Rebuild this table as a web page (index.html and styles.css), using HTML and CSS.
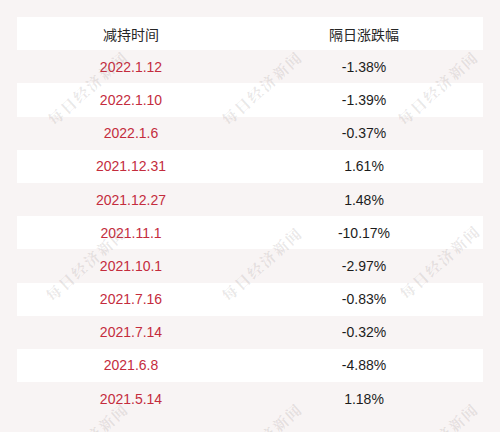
FILE: index.html
```html
<!DOCTYPE html>
<html lang="zh">
<head>
<meta charset="utf-8">
<link rel="stylesheet" href="styles.css">
</head>
<body>
<div class="page">
  <div class="table">
    <div class="row head"><div class="cell">减持时间</div><div class="cell">隔日涨跌幅</div></div>
    <div class="row"><div class="cell date">2022.1.12</div><div class="cell">-1.38%</div></div>
    <div class="row alt"><div class="cell date">2022.1.10</div><div class="cell">-1.39%</div></div>
    <div class="row"><div class="cell date">2022.1.6</div><div class="cell">-0.37%</div></div>
    <div class="row alt"><div class="cell date">2021.12.31</div><div class="cell">1.61%</div></div>
    <div class="row"><div class="cell date">2021.12.27</div><div class="cell">1.48%</div></div>
    <div class="row alt"><div class="cell date">2021.11.1</div><div class="cell">-10.17%</div></div>
    <div class="row"><div class="cell date">2021.10.1</div><div class="cell">-2.97%</div></div>
    <div class="row alt"><div class="cell date">2021.7.16</div><div class="cell">-0.83%</div></div>
    <div class="row"><div class="cell date">2021.7.14</div><div class="cell">-0.32%</div></div>
    <div class="row alt"><div class="cell date">2021.6.8</div><div class="cell">-4.88%</div></div>
    <div class="row"><div class="cell date">2021.5.14</div><div class="cell">1.18%</div></div>
  </div>
  <div class="wm wm-a1">每日经济新闻</div>
  <div class="wm wm-a2">每日经济新闻</div>
  <div class="wm wm-a3">每日经济新闻</div>
  <div class="wm wm-b1">每日经济新闻</div>
  <div class="wm wm-b2">每日经济新闻</div>
  <div class="wm wm-b3">每日经济新闻</div>
  <div class="wm wm-c1">每日经济新闻</div>
  <div class="wm wm-c2">每日经济新闻</div>
  <div class="wm wm-c3">每日经济新闻</div>
</div>
</body>
</html>
```
FILE: styles.css
```css
html, body {
  margin: 0;
  padding: 0;
  background: #f8f4f4;
}
.page {
  position: relative;
  width: 500px;
  height: 432px;
  overflow: hidden;
  padding: 17px 17px 0 17px;
  box-sizing: border-box;
  font-family: "Liberation Sans", Arial, "Noto Sans CJK SC", sans-serif;
}
.table {
  width: 466px;
  display: flex;
  flex-direction: column;
}
.row {
  display: grid;
  grid-template-columns: 228px 238px;
  height: 33.2px;
  align-items: center;
}
.row.head, .row.alt {
  background: #ffffff;
}
.cell {
  text-align: center;
  font-size: 14px;
  color: #1c1c1c;
}
.head .cell {
  font-family: "Noto Sans CJK SC", sans-serif;
  font-size: 14px;
  color: #262626;
}
.cell.date {
  color: #c42c3d;
}
.wm {
  position: absolute;
  width: 120px;
  margin-left: -60px;
  margin-top: -10px;
  height: 20px;
  line-height: 20px;
  text-align: center;
  font-family: "Noto Serif CJK SC", "Noto Sans CJK SC", serif;
  font-weight: bold;
  font-size: 15px;
  letter-spacing: 2px;
  color: rgba(120, 110, 110, 0.16);
  transform: rotate(-42deg);
  white-space: nowrap;
  pointer-events: none;
}
.wm-a1 { left: 88px; top: 88px; }
.wm-a2 { left: 262px; top: 88px; }
.wm-a3 { left: 438px; top: 88px; }
.wm-b1 { left: 86px; top: 264px; }
.wm-b2 { left: 262px; top: 264px; }
.wm-b3 { left: 440px; top: 262px; }
.wm-c1 { left: 88px; top: 440px; }
.wm-c2 { left: 262px; top: 440px; }
.wm-c3 { left: 438px; top: 440px; }
```
